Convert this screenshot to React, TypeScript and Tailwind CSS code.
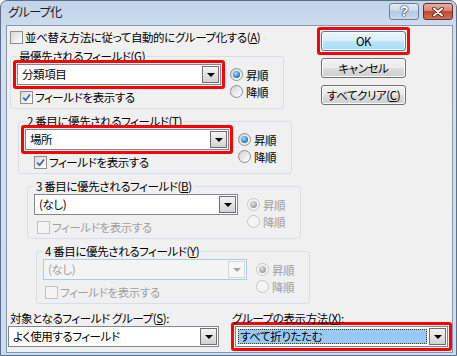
import React from "react"

type Group = {
  label: string
  mnemonic: string
  value: string
  shown: boolean
  offset: string
  cbOffset: string
  highlight: boolean
  comboOff: boolean
  restOff: boolean
}

const groups: Group[] = [
  { label: "最優先されるフィールド", mnemonic: "G", value: "分類項目", shown: true, offset: "ml-0", cbOffset: "ml-[3px]", highlight: true, comboOff: false, restOff: false },
  { label: "2 番目に優先されるフィールド", mnemonic: "T", value: "場所", shown: true, offset: "ml-[8px]", cbOffset: "ml-[9px]", highlight: true, comboOff: false, restOff: false },
  { label: "3 番目に優先されるフィールド", mnemonic: "B", value: "(なし)", shown: false, offset: "ml-[17px]", cbOffset: "ml-[3px]", highlight: false, comboOff: false, restOff: true },
  { label: "4 番目に優先されるフィールド", mnemonic: "Y", value: "(なし)", shown: false, offset: "ml-[26px]", cbOffset: "ml-[2px]", highlight: false, comboOff: true, restOff: true },
]

function Key({ k }: { k: string }) {
  return <span className="underline underline-offset-[1px]">{k}</span>
}

function Check({ on, off }: { on: boolean; off?: boolean }) {
  return (
    <span className={`flex h-[13px] w-[13px] shrink-0 items-center justify-center border ${off ? "border-[#c3c3c3] bg-[#f4f4f4]" : "border-[#8e8f8f] bg-gradient-to-br from-[#d8d8d8] to-white"}`}>
      {on && (
        <svg width="9" height="9" viewBox="0 0 9 9">
          <path d="M1.2 4.6 L3.6 7.2 L8 1.4" fill="none" stroke="#4b6390" strokeWidth="1.7" />
        </svg>
      )}
    </span>
  )
}

function Radio({ on, off, label }: { on: boolean; off: boolean; label: string }) {
  return (
    <div className="flex h-[17px] items-center">
      <span className={`flex h-[13px] w-[13px] items-center justify-center rounded-full border ${off ? "border-[#c6c6c6] bg-[#f4f4f4]" : "border-[#8e8f8f] bg-gradient-to-br from-[#d4d4d4] to-white"}`}>
        {on && (
          <span className={`h-[7px] w-[7px] rounded-full ${off ? "bg-[radial-gradient(circle_at_40%_35%,#e4e4e4,#9a9a9a_75%)]" : "bg-[radial-gradient(circle_at_40%_35%,#a6e1ff,#1b73c4_70%,#0c4d8c)]"}`} />
        )}
      </span>
      <span className={`ml-[3px] leading-[14px] ${off ? "text-[#a0a0a0]" : ""}`}>{label}</span>
    </div>
  )
}

function Combo({ value, width, off, selected }: { value: string; width: string; off?: boolean; selected?: boolean }) {
  return (
    <div className={`flex h-[21px] ${width} items-center border ${off ? "border-[#b5c8dc] bg-[#f4f4f4] text-[#a0a0a0]" : "border-[#828790] bg-white"}`}>
      {selected ? (
        <div className="mx-[2px] flex h-[15px] flex-1 items-center border border-dotted border-[#3a3a3a] bg-[#99c9f8] pl-[1px] leading-[13px]">
          {value}
        </div>
      ) : (
        <div className="flex-1 pl-[4px] leading-[15px]">{value}</div>
      )}
      <div className={`mr-[1px] flex h-[17px] w-[17px] items-center justify-center border ${off ? "border-[#cdd9e5] bg-[#f7f7f7]" : "border-[#6f6f6f] bg-gradient-to-b from-[#f4f4f4] to-[#d2d2d2]"}`}>
        <div className={`h-0 w-0 border-x-[4px] border-t-[4px] border-x-transparent ${off ? "border-t-[#a6a6a6]" : "border-t-black"}`} />
      </div>
    </div>
  )
}

function Highlight({ children }: { children: React.ReactNode }) {
  return <div className="-m-[4px] rounded-[3px] border-[3px] border-[#ff0000] p-[1px]">{children}</div>
}

function Btn({ children, primary }: { children: React.ReactNode; primary?: boolean }) {
  return (
    <div
      className={`flex h-[20px] w-[85px] items-center justify-center rounded-[3px] border leading-[14px] shadow-[inset_0_0_0_1px_#fbfbfb] ${
        primary
          ? "border-[#3c7fb1] bg-[linear-gradient(#eaf6fd,#d9f0fc_50%,#bee6fd_50%,#a7d9f5)]"
          : "border-[#707070] bg-[linear-gradient(#f2f2f2,#ebebeb_50%,#dddddd_50%,#cfcfcf)]"
      }`}
    >
      {children}
    </div>
  )
}

function FieldGroup({ g }: { g: Group }) {
  const combo = <Combo value={g.value} width="w-[204px]" off={g.comboOff} />
  return (
    <fieldset className={`${g.offset} mt-[6px] w-[274px] rounded-[3px] border border-[#d5dfe5] pb-[4px] pl-[6px] pr-[6px]`}>
      <legend className="px-[2px] leading-[12px]">
        {g.label}(<Key k={g.mnemonic} />)
      </legend>
      <div className="flex">
        <div className="pt-[2px]">
          {g.highlight ? <Highlight>{combo}</Highlight> : combo}
          <div className={`mt-[5px] flex h-[14px] items-center ${g.cbOffset}`}>
            <Check on={g.shown} off={g.restOff} />
            <span className={`ml-[2px] leading-[14px] ${g.restOff ? "text-[#a0a0a0]" : ""}`}>フィールドを表示する</span>
          </div>
        </div>
        <div className="ml-[9px] pt-[4px]">
          <Radio on label="昇順" off={g.restOff} />
          <Radio on={false} label="降順" off={g.restOff} />
        </div>
      </div>
    </fieldset>
  )
}

export default function App() {
  return (
    <div className="h-[356px] w-[457px] overflow-hidden rounded-t-[7px] border border-[#5b6f88] bg-[linear-gradient(#c2d4ea,#d3e1f1_40px,#cadcef)] pb-[2px] pl-[5px] pr-[3px] font-['Noto_Sans_CJK_JP',sans-serif] text-[11.5px] tracking-[-0.4px] text-black [font-feature-settings:'palt']">
      <div className="flex h-[24px] items-start">
        <div className="pl-[2px] pt-[3px] text-[12.5px] leading-[16px] tracking-[-1px] text-[#1e1e1e]">グループ化</div>
        <div className="ml-auto flex gap-[4px] pt-[2px]">
          <div className="flex h-[17px] w-[30px] items-center justify-center rounded-[3px] border border-[#6a7d96] bg-[linear-gradient(#e3ecf6,#c9d8ea_50%,#b4c8df_50%,#cbdaeb)] font-['Liberation_Sans',sans-serif] text-[14px] font-bold leading-[13px] text-white [text-shadow:0_0_1px_#2c3a4e,0_0_1px_#2c3a4e,0_0_2px_#2c3a4e]">
            ?
          </div>
          <div className="flex h-[17px] w-[30px] items-center justify-center rounded-[3px] border border-[#6b2b21] bg-[linear-gradient(#e8b1a4,#d67c66_50%,#c04a2e_50%,#cf7257)]">
            <svg width="12" height="10" viewBox="0 0 12 10">
              <path d="M2 1.5 L10 8.5 M10 1.5 L2 8.5" stroke="#4a1a12" strokeWidth="3.6" strokeLinecap="round" />
              <path d="M2 1.5 L10 8.5 M10 1.5 L2 8.5" stroke="#ffffff" strokeWidth="2" strokeLinecap="round" />
            </svg>
          </div>
        </div>
      </div>

      <div className="h-[328px] border border-[#8598b2] bg-[#f0f0f0]">
        <div className="flex">
          <div className="w-[304px] pl-[3px]">
            <div className="mt-[4px] flex h-[14px] items-center">
              <Check on={false} />
              <span className="ml-[2px] leading-[14px]">
                並べ替え方法に従って自動的にグループ化する(<Key k="A" />)
              </span>
            </div>
            {groups.map((g) => (
              <FieldGroup key={g.mnemonic} g={g} />
            ))}
          </div>
          <div className="flex flex-col gap-[7px] pl-[10px] pt-[5px]">
            <Highlight>
              <Btn primary>OK</Btn>
            </Highlight>
            <Btn>キャンセル</Btn>
            <Btn>
              すべてクリア(<Key k="C" />)
            </Btn>
          </div>
        </div>

        <div className="mt-[8px] flex">
          <div className="ml-[1px] w-[211px]">
            <div className="ml-[2px] h-[13px] leading-[13px]">
              対象となるフィールド グループ(<Key k="S" />):
            </div>
            <div className="mt-[1px]">
              <Combo value="よく使用するフィールド" width="w-[211px]" />
            </div>
          </div>
          <div className="ml-[13px]">
            <div className="h-[13px] leading-[13px]">
              グループの表示方法(<Key k="X" />):
            </div>
            <div className="ml-[3px] mt-[1px]">
              <Highlight>
                <Combo value="すべて折りたたむ" width="w-[213px]" selected />
              </Highlight>
            </div>
          </div>
        </div>
      </div>
    </div>
  )
}
